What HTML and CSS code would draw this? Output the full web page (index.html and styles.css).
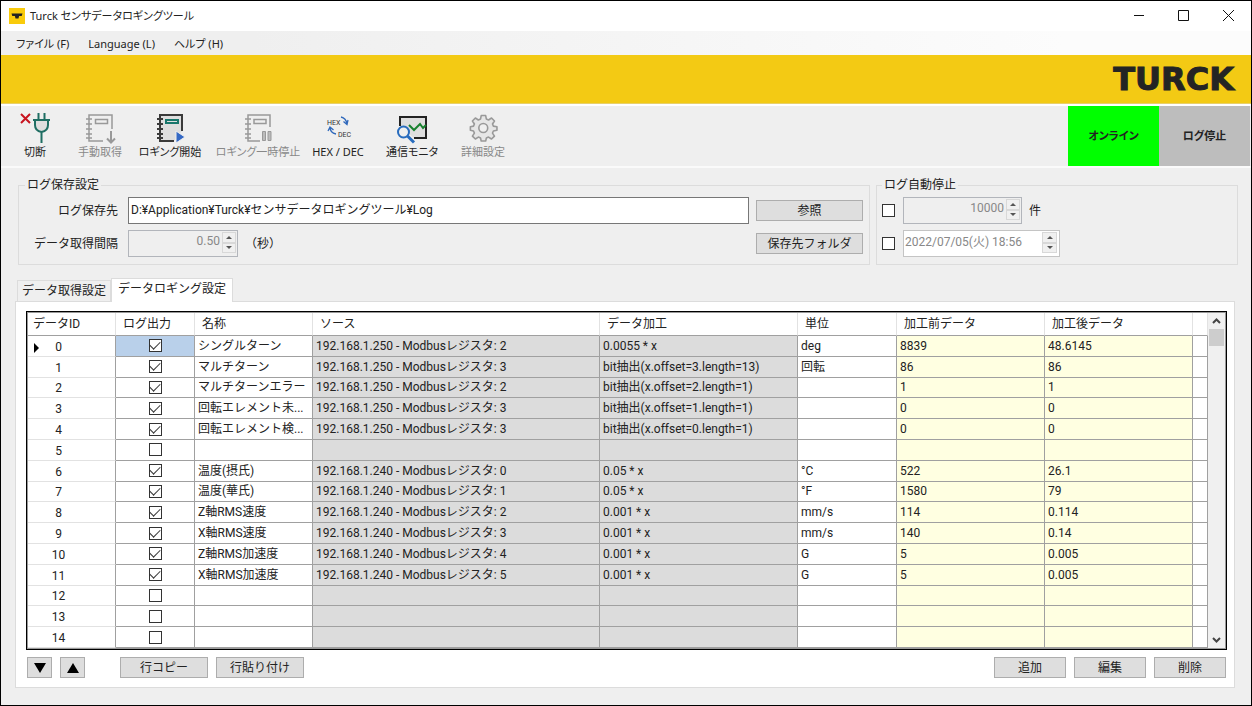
FILE: index.html
```html
<!DOCTYPE html>
<html lang="ja">
<head>
<meta charset="utf-8">
<title>Turck センサデータロギングツール</title>
<link rel="stylesheet" href="styles.css">
</head>
<body>
<div class="window">
  <header class="titlebar">
    <svg class="app-icon" width="16" height="16" viewBox="0 0 16 16"><rect width="16" height="16" fill="#f9cb0b"/><path d="M2.500 5.500h11l-.8 2.500h-2.600l-.6 2.500h-3l-.6-2.500H3.300z" fill="#222"/></svg>
    <span class="title">Turck センサデータロギングツール</span>
    <div class="win-controls">
      <button aria-label="最小化"><svg width="12" height="12"><path d="M1 5.500h10" stroke="#111" fill="none"/></svg></button>
      <button aria-label="最大化"><svg width="12" height="12"><path d="M.5.500h10v10H.5z" stroke="#111" fill="none"/></svg></button>
      <button aria-label="閉じる"><svg width="12" height="12"><path d="M0 0l11 11M11 0L0 11" stroke="#111" fill="none"/></svg></button>
    </div>
  </header>
  <nav class="menubar">
    <button>ファイル (F)</button><button>Language (L)</button><button>ヘルプ (H)</button>
  </nav>
  <div class="brand"><span class="logo">TURCK</span></div>
  <div class="toolbar">
    <div class="tools">
      <button>
        <svg width="32" height="32" viewBox="0 0 32 32" fill="none"><path d="M2 2l9 9M11 2l-9 9" stroke="#c81420" stroke-width="2"/><path d="M16 8h13v5q0 6-6.500 7-6.500-1-6.500-7z" fill="#dedede"/><path d="M19.500 1v7M25.500 1v7M14 8h17M16 8v5q0 6 6.500 7q6.500-1 6.500-7V8M22.500 20v11" stroke="#1f6e63" stroke-width="2"/></svg>
        <span>切断</span>
      </button>
      <button disabled>
        <svg width="32" height="32" viewBox="0 0 32 32" fill="none" stroke="#999"><path d="M28 17V3H5v26h14" stroke-width="1.500"/><path d="M2 7h6M2 12h6M2 17h6M2 22h6M2 26h6" stroke-width="1.500"/><path d="M11.500 7.500h12v4h-12z" stroke-width="1.500"/><path d="M27 19v11M23 26.500l4 4 4-4" stroke-width="2"/></svg>
        <span>手動取得</span>
      </button>
      <button>
        <svg width="32" height="32" viewBox="0 0 32 32" fill="none" stroke="#3a3a3a"><path d="M28 19V3H6v26h14" fill="#dedede" stroke-width="2"/><path d="M3 7h6M3 12h6M3 17h6M3 22h6M3 26h6" stroke-width="2"/><path d="M12 8h12v3H12z" stroke="#17766b" stroke-width="2"/><path d="M22 19v12l9-6z" fill="#3468c4" stroke="#efefef"/></svg>
        <span>ロギング開始</span>
      </button>
      <button disabled>
        <svg width="32" height="32" viewBox="0 0 32 32" fill="none" stroke="#999"><path d="M28 15V3H6v26h12" stroke-width="1.500"/><path d="M3 7h6M3 12h6M3 17h6M3 22h6M3 26h6" stroke-width="1.500"/><path d="M12 7.500h12v4H12z" stroke-width="1.500"/><path d="M20.500 19.500h3v9h-3zM26 19.500h3v9h-3z" fill="#bbb"/></svg>
        <span>ロギング一時停止</span>
      </button>
      <button>
        <svg width="32" height="32" viewBox="0 0 32 32" fill="none"><text x="5" y="13" class="icon-text">HEX</text><text x="16" y="25" class="icon-text">DEC</text><path d="M19 5q5 1 6 7M21.500 9.500l3.500 3 1-4.500M8 15q0 6 6 7M6 19l2-4 3.500 3" stroke="#2f68bb" stroke-width="1.300"/></svg>
        <span>HEX / DEC</span>
      </button>
      <button>
        <svg width="32" height="32" viewBox="0 0 32 32" fill="none"><path d="M4 14V5h26v21H18" fill="#dedede" stroke="#222" stroke-width="2"/><path d="M13 13l5 5 6-6 3 4 3-3" stroke="#17802e" stroke-width="2"/><circle cx="7.500" cy="20" r="5.500" fill="#efefef" stroke="#286cbe" stroke-width="2"/><path d="M11.500 24l6.500 6.500" stroke="#286cbe" stroke-width="3"/></svg>
        <span>通信モニタ</span>
      </button>
      <button disabled>
        <svg width="32" height="32" viewBox="-2 -1 36 36" stroke="#999" stroke-width="1.800" stroke-linejoin="round"><path d="M14 3h5l.8 4 2.400 1 3.400-2.200 3.300 3.300-2.200 3.400 1 2.400 4 .6v4l-4 .8-1 2.400 2.200 3.400-3.300 3.300-3.400-2.200-2.400 1-.8 3.500h-5l-.8-3.500-2.400-1-3.400 2.200-3.300-3.300 2.200-3.400-1-2.400-3.500-.8v-4l3.500-.6 1-2.400-2.200-3.400 3.300-3.300L10.800 8l2.400-1z" fill="#e6e6e6"/><circle cx="16.300" cy="17" r="5" fill="#efefef"/></svg>
        <span>詳細設定</span>
      </button>
    </div>
    <div class="status"><div class="online">オンライン</div><div class="stopped">ログ停止</div></div>
  </div>
  <main class="content">
    <div class="settings">
      <fieldset>
        <legend>ログ保存設定</legend>
        <div class="save-grid">
          <label for="path">ログ保存先</label>
          <input id="path" class="box" type="text" value="D:¥Application¥Turck¥センサデータロギングツール¥Log">
          <button class="btn">参照</button>
          <label for="interval">データ取得間隔</label>
          <div class="field-row">
            <div class="spin off interval"><input id="interval" class="num" type="text" value="0.50" disabled><div class="arrows"><button disabled aria-label="増やす"></button><button disabled aria-label="減らす"></button></div></div>
            <span>（秒）</span>
          </div>
          <button class="btn">保存先フォルダ</button>
        </div>
      </fieldset>
      <fieldset class="auto-stop">
        <legend>ログ自動停止</legend>
        <div class="stop-grid">
          <input type="checkbox" aria-label="件数で停止">
          <div class="field-row">
            <div class="spin off count"><input class="num" type="text" value="10000" disabled aria-label="件数"><div class="arrows"><button disabled aria-label="増やす"></button><button disabled aria-label="減らす"></button></div></div>
            <span>件</span>
          </div>
          <input type="checkbox" aria-label="日時で停止">
          <div class="spin date"><input type="text" value="2022/07/05(火) 18:56" disabled aria-label="日時"><div class="arrows"><button disabled aria-label="増やす"></button><button disabled aria-label="減らす"></button></div></div>
        </div>
      </fieldset>
    </div>
    <div class="tabs" role="tablist"><button role="tab">データ取得設定</button><button role="tab" aria-selected="true" class="active">データロギング設定</button></div>
    <section class="panel">
      <div class="grid-frame">
        <div class="grid-view">
          <table>
            <colgroup><col class="c-id"><col class="c-log"><col class="c-name"><col class="c-src"><col class="c-calc"><col class="c-unit"><col class="c-val"><col class="c-val"><col class="c-rest"></colgroup>
            <thead><tr><th>データID</th><th>ログ出力</th><th>名称</th><th>ソース</th><th>データ加工</th><th>単位</th><th>加工前データ</th><th>加工後データ</th><th></th></tr></thead>
            <tbody>
              <tr class="current"><th>0</th><td><input type="checkbox" checked aria-label="ログ出力 0"></td><td>シングルターン</td><td>192.168.1.250 - Modbusレジスタ: 2</td><td>0.0055 * x</td><td>deg</td><td>8839</td><td>48.6145</td><td></td></tr>
              <tr><th>1</th><td><input type="checkbox" checked aria-label="ログ出力 1"></td><td>マルチターン</td><td>192.168.1.250 - Modbusレジスタ: 3</td><td>bit抽出(x.offset=3.length=13)</td><td>回転</td><td>86</td><td>86</td><td></td></tr>
              <tr><th>2</th><td><input type="checkbox" checked aria-label="ログ出力 2"></td><td>マルチターンエラー</td><td>192.168.1.250 - Modbusレジスタ: 2</td><td>bit抽出(x.offset=2.length=1)</td><td></td><td>1</td><td>1</td><td></td></tr>
              <tr><th>3</th><td><input type="checkbox" checked aria-label="ログ出力 3"></td><td>回転エレメント未...</td><td>192.168.1.250 - Modbusレジスタ: 3</td><td>bit抽出(x.offset=1.length=1)</td><td></td><td>0</td><td>0</td><td></td></tr>
              <tr><th>4</th><td><input type="checkbox" checked aria-label="ログ出力 4"></td><td>回転エレメント検...</td><td>192.168.1.250 - Modbusレジスタ: 3</td><td>bit抽出(x.offset=0.length=1)</td><td></td><td>0</td><td>0</td><td></td></tr>
              <tr><th>5</th><td><input type="checkbox" aria-label="ログ出力 5"></td><td></td><td></td><td></td><td></td><td></td><td></td><td></td></tr>
              <tr><th>6</th><td><input type="checkbox" checked aria-label="ログ出力 6"></td><td>温度(摂氏)</td><td>192.168.1.240 - Modbusレジスタ: 0</td><td>0.05 * x</td><td>°C</td><td>522</td><td>26.1</td><td></td></tr>
              <tr><th>7</th><td><input type="checkbox" checked aria-label="ログ出力 7"></td><td>温度(華氏)</td><td>192.168.1.240 - Modbusレジスタ: 1</td><td>0.05 * x</td><td>°F</td><td>1580</td><td>79</td><td></td></tr>
              <tr><th>8</th><td><input type="checkbox" checked aria-label="ログ出力 8"></td><td>Z軸RMS速度</td><td>192.168.1.240 - Modbusレジスタ: 2</td><td>0.001 * x</td><td>mm/s</td><td>114</td><td>0.114</td><td></td></tr>
              <tr><th>9</th><td><input type="checkbox" checked aria-label="ログ出力 9"></td><td>X軸RMS速度</td><td>192.168.1.240 - Modbusレジスタ: 3</td><td>0.001 * x</td><td>mm/s</td><td>140</td><td>0.14</td><td></td></tr>
              <tr><th>10</th><td><input type="checkbox" checked aria-label="ログ出力 10"></td><td>Z軸RMS加速度</td><td>192.168.1.240 - Modbusレジスタ: 4</td><td>0.001 * x</td><td>G</td><td>5</td><td>0.005</td><td></td></tr>
              <tr><th>11</th><td><input type="checkbox" checked aria-label="ログ出力 11"></td><td>X軸RMS加速度</td><td>192.168.1.240 - Modbusレジスタ: 5</td><td>0.001 * x</td><td>G</td><td>5</td><td>0.005</td><td></td></tr>
              <tr><th>12</th><td><input type="checkbox" aria-label="ログ出力 12"></td><td></td><td></td><td></td><td></td><td></td><td></td><td></td></tr>
              <tr><th>13</th><td><input type="checkbox" aria-label="ログ出力 13"></td><td></td><td></td><td></td><td></td><td></td><td></td><td></td></tr>
              <tr><th>14</th><td><input type="checkbox" aria-label="ログ出力 14"></td><td></td><td></td><td></td><td></td><td></td><td></td><td></td></tr>
            </tbody>
          </table>
        </div>
        <div class="scrollbar">
          <button aria-label="上へ"><svg width="9" height="6"><path d="M1 5l3.500-3.500L8 5" fill="none" stroke="#444" stroke-width="2"/></svg></button>
          <div class="thumb"></div>
          <button class="down" aria-label="下へ"><svg width="9" height="6"><path d="M1 1l3.500 3.500L8 1" fill="none" stroke="#444" stroke-width="2"/></svg></button>
        </div>
      </div>
      <div class="actions">
        <button class="btn arrow" aria-label="下へ移動"><svg width="12" height="10"><path d="M0 0h12L6 10z"/></svg></button>
        <button class="btn arrow" aria-label="上へ移動"><svg width="12" height="10"><path d="M0 10h12L6 0z"/></svg></button>
        <button class="btn wide first">行コピー</button>
        <button class="btn wide">行貼り付け</button>
        <button class="btn mid push">追加</button>
        <button class="btn mid">編集</button>
        <button class="btn mid">削除</button>
      </div>
    </section>
  </main>
</div>
</body>
</html>
```

FILE: styles.css
```css
* { box-sizing: border-box; }
body { margin: 0; font: 12px/16px Roboto, "Noto Sans CJK JP", sans-serif; color: #222; }
button, input { font: inherit; color: inherit; }
button { padding: 0; border: 0; background: none; }
svg { display: block; }

.window { min-height: 100vh; display: flex; flex-direction: column; border: 1px solid #000; background: #efefef; }

.titlebar, .menubar, .tools, .status { font-family: "Noto Sans", "Noto Sans CJK JP", sans-serif; font-size: 11px; font-feature-settings: "palt"; }
.titlebar { height: 30px; display: flex; align-items: center; gap: 5px; padding-left: 8px; background: #fff; }
.win-controls { display: flex; margin-left: auto; }
.win-controls button { width: 45px; height: 28px; display: grid; place-items: center; }

.menubar { height: 24px; display: flex; gap: 19px; padding: 2px 0 0 15px; background: linear-gradient(90deg, #efefef 20%, #fcfcfc 85%); }

.brand { height: 49px; display: flex; align-items: center; justify-content: flex-end; padding-right: 17px; background: #f3ca14; border-bottom: 1px solid #e8d06a; }
.logo { font: bold 32px/36px "DejaVu Sans", sans-serif; color: #242424; -webkit-text-stroke: 1px #242424; }

.toolbar { display: flex; justify-content: space-between; border-top: 2px solid #fff; border-bottom: 2px solid #fafafa; padding-right: 1px; }
.tools { display: grid; grid-template-columns: 66px 64px 76px 100px 60px 88px 54px; padding-left: 1px; height: 60px; }
.tools button { display: flex; flex-direction: column; align-items: center; padding-top: 6px; white-space: nowrap; }
.tools button:disabled { color: #888; }
.icon-text { font: 7px Roboto, sans-serif; fill: #333; }
.status { display: flex; font-weight: bold; }
.status div { width: 91px; display: grid; place-items: center; }
.online { background: #0f0; }
.stopped { background: #bdbdbd; }

.content { flex: 1; display: flex; flex-direction: column; padding: 9px 13px 17px 14px; }
.settings { display: grid; grid-template-columns: 852fr 362fr; gap: 6px; padding-left: 3px; }
fieldset { min-width: 0; margin: 0; padding: 4px 6px 7px; border: 1px solid #dcdcdc; }
.auto-stop { padding-left: 5px; }
legend { padding: 0 2px; }
.save-grid { display: grid; grid-template-columns: 96px 1fr 107px; grid-auto-rows: 27px; gap: 6px 7px; align-items: center; }
.save-grid label { text-align: right; padding-right: 3px; }
.save-grid .box { height: 27px; padding: 0 2px 4px; border: 1px solid #777; border-radius: 0; background: #fff; }
.field-row { display: flex; align-items: center; gap: 7px; }
.btn { height: 21px; border: 1px solid #adadad; background: #dedede; }
.spin { height: 27px; display: flex; border: 1px solid #c4c4c4; background: #fff; }
.spin.off { background: #efefef; border-color: #b2b5bb; }
.spin input { flex: 1; min-width: 0; padding: 0 0 3px 1px; border: 0; background: none; color: #888; }
.spin .num { text-align: right; padding: 0 2px 6px; }
.interval { width: 110px; }
.count { width: 119px; }
.date { width: 157px; }
.arrows { display: flex; flex-direction: column; width: 15px; padding: 1px 1px 3px 0; }
.date .arrows { width: 17px; padding-right: 2px; }
.arrows button { flex: 1; display: grid; place-items: center; border: 1px solid #d8d8d8; background: #f0f0f0; }
.arrows button::before { content: ""; border: 3px solid transparent; border-top: 0; border-bottom-color: #555; }
.arrows button:last-child::before { border-bottom: 0; border-top: 3px solid #555; }
.stop-grid { display: grid; grid-template-columns: 13px 1fr; gap: 6px 8px; align-items: center; }

input[type="checkbox"] { appearance: none; width: 13px; height: 13px; margin: 0; display: grid; place-items: center; border: 1px solid #333; background: #fff; }
input[type="checkbox"]:checked::before { content: ""; width: 9px; height: 5px; border: solid #333; border-width: 0 0 1px 1px; transform: rotate(-45deg); margin-bottom: 3px; }

.tabs { display: flex; align-items: flex-end; margin-top: 13px; padding-left: 2px; }
.tabs button { height: 21px; width: 94px; border: 1px solid #dcdcdc; border-bottom: 0; background: #efefef; white-space: nowrap; }
.tabs .active { height: 24px; width: 122px; margin-bottom: -1px; padding-bottom: 3px; background: #fff; z-index: 1; }

.panel { flex: 1; display: flex; flex-direction: column; gap: 7px; margin-right: 3px; padding: 9px 7px 9px 10px; border: 1px solid #dcdcdc; background: #fff; }
.grid-frame { flex: 1; display: flex; border: 1px solid #000; outline: 1px solid #999; outline-offset: -2px; padding: 1px; }
.grid-view { flex: 1; display: flex; }
table { width: 100%; height: 100%; table-layout: fixed; border-collapse: separate; border-spacing: 0; }
.c-id { width: 88px; }
.c-log { width: 79px; }
.c-name { width: 118px; }
.c-src { width: 287px; }
.c-calc { width: 198px; }
.c-unit { width: 99px; }
.c-val { width: 148px; }
th, td { padding: 0 3px; border: solid #a0a0a0; border-width: 0 1px 1px 0; text-align: left; font-weight: normal; white-space: nowrap; overflow: hidden; line-height: 16px; }
thead th { height: 23px; padding-left: 7px; border-right-color: #e2e2e2; }
thead th:first-child { padding-left: 5px; }
tbody th { position: relative; padding: 2px 26px 0 0; text-align: center; border-bottom-color: #e2e2e2; }
.current th::before { content: ""; position: absolute; left: 6px; top: 7px; border: 5px solid transparent; border-left-color: #000; border-right: 0; }
td:nth-child(2) input { margin: 0 auto; }
.current td:nth-child(2) { background: #b9d0ea; }
td:nth-child(4), td:nth-child(5) { background: #dcdcdc; }
td:nth-child(7), td:nth-child(8) { background: #ffffe1; }
.scrollbar { width: 17px; display: flex; flex-direction: column; background: #f0f0f0; }
.scrollbar button { height: 16px; display: grid; place-items: center; }
.scrollbar .down { margin-top: auto; }
.thumb { height: 17px; margin: 0 1px; background: #cdcdcd; }

.actions { display: flex; gap: 8px; padding: 0 1px; }
.arrow { width: 25px; display: grid; place-items: center; }
.wide { width: 88px; }
.first { margin-left: 27px; }
.mid { width: 72px; }
.push { margin-left: auto; }
```
